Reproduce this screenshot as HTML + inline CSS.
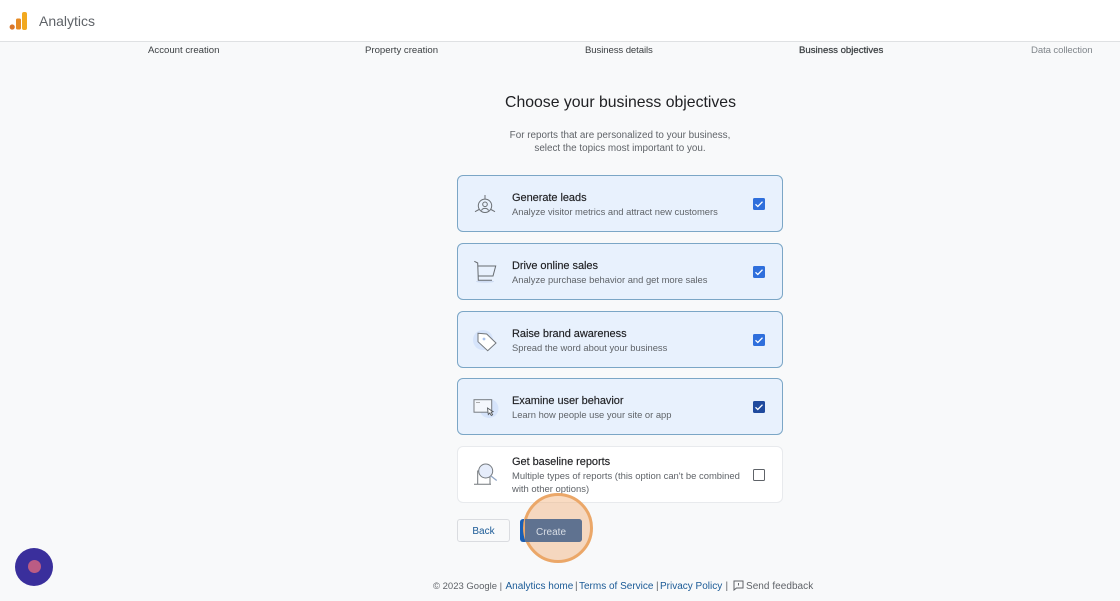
<!DOCTYPE html>
<html lang="en">
<head>
<meta charset="utf-8">
<title>Analytics</title>
<style>
html,body{margin:0;padding:0;width:1120px;height:601px;overflow:hidden;background:#f8f9fa;font-family:"Liberation Sans",sans-serif;color:#202124}
.abs{position:absolute;white-space:nowrap}
#top{position:absolute;left:0;top:0;width:1120px;height:41px;background:#fff;border-bottom:1px solid #dfe1e3}
.step{position:absolute;top:45px;font-size:9.6px;line-height:12px;white-space:nowrap;color:#3c4043}
.card{position:absolute;left:457px;width:324px;height:55px;border:1px solid #7ba6c6;border-radius:6px;background:#e8f1fd}
.card.off{background:#fff;border-color:#e8eaed}
.t{position:absolute;left:54px;top:15px;font-size:11px;line-height:14px;color:#202124;letter-spacing:-.05px;white-space:nowrap;-webkit-text-stroke:.15px #202124}
.d{position:absolute;left:54px;top:29px;font-size:9.4px;line-height:13px;color:#5f6368;white-space:nowrap}
.cb{position:absolute;left:295px;top:22px;width:12px;height:12px;background:#2f6fdc;border-radius:1.5px}
.cb svg{position:absolute;left:0;top:0}
.ic{position:absolute;left:12px;top:10px}
.f{position:absolute;top:580px;font-size:10px;line-height:13px;white-space:nowrap;color:#5f6368}
a{color:#1a5a96;text-decoration:none}
</style>
</head>
<body>
<div id="top"></div>
<svg class="abs" style="left:9px;top:11px" width="19" height="20" viewBox="0 0 19 20">
<circle cx="3.2" cy="16" r="2.6" fill="#d9762b"/>
<rect x="7" y="7.5" width="5" height="11" rx="1.5" fill="#e58a24"/>
<rect x="13" y="1" width="5" height="18" rx="2" fill="#f2a91f"/>
</svg>
<div class="abs" style="left:39px;top:13px;font-size:14px;line-height:17px;color:#5f6368">Analytics</div>

<div class="step" style="left:148px">Account creation</div>
<div class="step" style="left:365px">Property creation</div>
<div class="step" style="left:585px;letter-spacing:-.1px">Business details</div>
<div class="step" style="left:799px;-webkit-text-stroke:.25px #3c4043">Business objectives</div>
<div class="step" style="left:1031px;color:#80868b;letter-spacing:-.1px">Data collection</div>

<div class="abs" style="left:0;width:1241px;top:93px;text-align:center;font-size:15.8px;line-height:20px;color:#202124">Choose your business objectives</div>
<div class="abs" style="left:0;width:1240px;top:129px;text-align:center;font-size:9.9px;line-height:13px;color:#5f6368">For reports that are personalized to your business,<br>select the topics most important to you.</div>

<div class="card" style="top:175px">
<svg class="ic" width="30" height="36" viewBox="0 0 30 36" fill="none" stroke="#6b7075" stroke-width="1">
<circle cx="15" cy="19.800" r="6.700"/><circle cx="15" cy="18.300" r="2.300"/><path d="M11.500 24.500c1-2.800 6-2.800 7 0"/><path d="M15 9v4M5 25.700l4-2.200M25 25.700l-4-2.200"/>
</svg>
<div class="t">Generate leads</div><div class="d">Analyze visitor metrics and attract new customers</div>
<div class="cb"><svg width="12" height="12" viewBox="0 0 12 12"><path d="M2.500 6.300l2.300 2.200 4.700-4.800" fill="none" stroke="#fff" stroke-width="1.300"/></svg></div>
</div>

<div class="card" style="top:243px">
<svg class="ic" width="30" height="36" viewBox="0 0 30 36" fill="none" stroke="#666b70" stroke-width="1">
<ellipse cx="15" cy="27.500" rx="9" ry="1.300" stroke="none" fill="#cfdcf3"/>
<path d="M4.300 7.300L7.700 9l.6 17.300H22"/><path d="M8 12h17.700L23 22H8"/>
</svg>
<div class="t">Drive online sales</div><div class="d">Analyze purchase behavior and get more sales</div>
<div class="cb"><svg width="12" height="12" viewBox="0 0 12 12"><path d="M2.500 6.300l2.300 2.200 4.700-4.800" fill="none" stroke="#fff" stroke-width="1.300"/></svg></div>
</div>

<div class="card" style="top:311px">
<svg class="ic" width="30" height="36" viewBox="0 0 30 36" fill="none">
<circle cx="13" cy="18" r="10" fill="#d6e4fb"/>
<path d="M8 11.300l8.700.7 9.300 9-8.300 7.700L8 19.700z" fill="#fff" stroke="#73787d" stroke-width="1"/><circle cx="14" cy="17" r="1.400" fill="#a9c3ee"/>
</svg>
<div class="t">Raise brand awareness</div><div class="d">Spread the word about your business</div>
<div class="cb" style="top:21.500px"><svg width="12" height="12" viewBox="0 0 12 12"><path d="M2.500 6.300l2.300 2.200 4.700-4.800" fill="none" stroke="#fff" stroke-width="1.300"/></svg></div>
</div>

<div class="card" style="top:378px">
<svg class="ic" width="30" height="36" viewBox="0 0 30 36" fill="none">
<circle cx="19" cy="19.500" r="9.500" fill="#d6e4fb"/>
<rect x="4" y="10.700" width="17.700" height="12.500" fill="#f4f7fc" stroke="#777c81"/>
<path d="M6 13.500h4" stroke="#999" stroke-width=".8"/>
<path d="M17.500 19l.8 6.500 1.500-1.500 1.500 2.500 1.300-.8-1.500-2.500 2-.5z" fill="#fff" stroke="#555a5f" stroke-width=".9"/>
</svg>
<div class="t">Examine user behavior</div><div class="d">Learn how people use your site or app</div>
<div class="cb" style="background:#1f4a9e"><svg width="12" height="12" viewBox="0 0 12 12"><path d="M2.500 6.300l2.300 2.200 4.700-4.800" fill="none" stroke="#fff" stroke-width="1.300"/></svg></div>
</div>

<div class="card off" style="top:446px">
<svg class="ic" width="30" height="36" viewBox="0 0 30 36" fill="none">
<path d="M4 27.300h17M7.700 27.300V14H11M20 20v7.300" stroke="#73787d"/>
<circle cx="15.700" cy="14" r="7" fill="#e6edfb" stroke="#777c81"/>
<path d="M21 19l5.700 4.500" stroke="#8fa4c4" stroke-width="1.300"/>
</svg>
<div class="t" style="top:8px">Get baseline reports</div>
<div class="d" style="top:23px;font-size:9.45px">Multiple types of reports (this option can't be combined<br>with other options)</div>
<div style="position:absolute;left:295px;top:22px;width:9.500px;height:9.500px;border:1.300px solid #5f6368;border-radius:1.500px"></div>
</div>

<div class="abs" style="left:457px;top:519px;width:51px;height:21px;border:1px solid #dadce0;border-radius:3px;background:#f8f9fa;text-align:center;font-size:10px;line-height:24px;color:#1a5a96">Back</div>
<div class="abs" style="left:520px;top:519px;width:62px;height:23px;border-radius:3px;background:#1a5fb4"></div>
<div class="abs" style="left:523px;top:493px;width:64px;height:64px;border:3.500px solid #eba768;border-radius:50%;background:rgba(240,170,110,.42)"></div>
<div class="abs" style="left:525px;top:519px;width:57px;height:23px;border-radius:0 3px 3px 0;background:#5f7290"></div>
<div class="abs" style="left:536px;top:526px;font-size:10px;line-height:13px;color:#d9dee6">Create</div>

<div class="abs" style="left:15px;top:548px;width:38px;height:38px;border-radius:50%;background:#3a2f9c"></div>
<div class="abs" style="left:28px;top:560px;width:13px;height:13px;border-radius:50%;background:#bb5c84"></div>

<div class="f" style="left:433px;font-size:9.5px">© 2023 Google |</div>
<div class="f" style="left:505.500px"><a>Analytics home</a></div>
<div class="f" style="left:575px">|</div>
<div class="f" style="left:579px"><a>Terms of Service</a></div>
<div class="f" style="left:656px">|</div>
<div class="f" style="left:660px"><a>Privacy Policy</a></div>
<div class="f" style="left:725.500px">|</div>
<svg class="abs" style="left:733px;top:580px" width="11" height="11" viewBox="0 0 11 11" fill="none" stroke="#5f6368" stroke-width="1"><path d="M1 1h9v7H3.500L1 10z"/><path d="M5.500 3v2.500"/></svg>
<div class="f" style="left:746px;letter-spacing:.04px">Send feedback</div>
</body>
</html>
